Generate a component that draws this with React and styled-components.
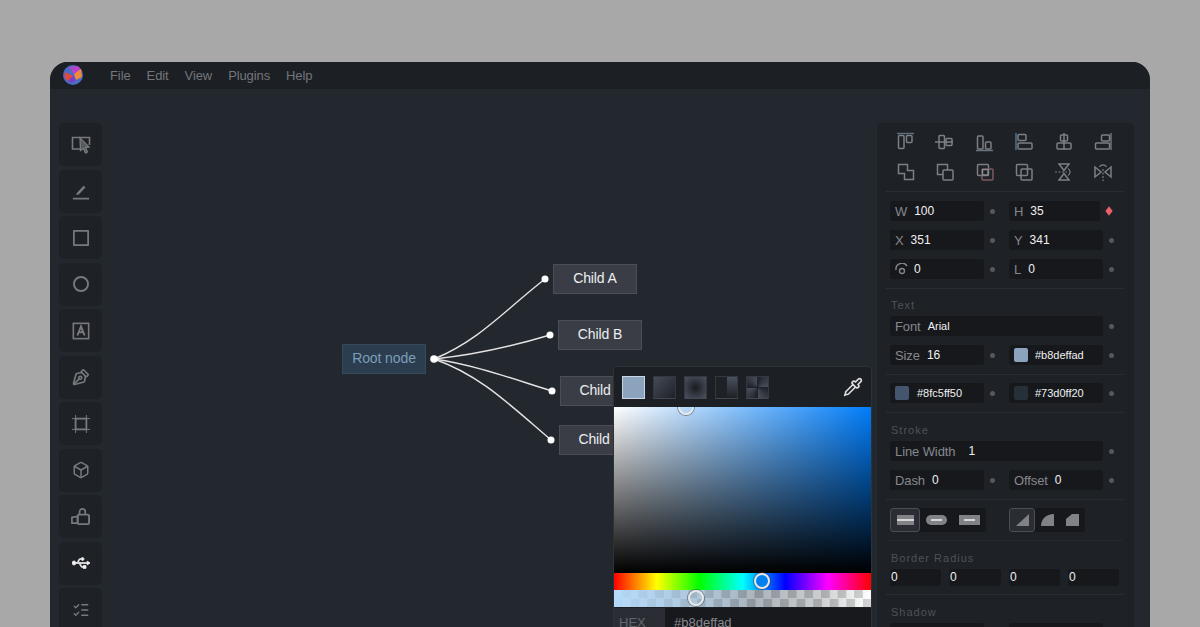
import React from "react";
import styled, { createGlobalStyle } from "styled-components";
import { Box, ListChecks, PenTool, Pipette } from "lucide-react";
import { FaUsb } from "react-icons/fa";

const GlobalStyle = createGlobalStyle`
  html, body {
    margin: 0;
    height: 627px;
    overflow: hidden;
    background: #a8a8a8;
    font-family: "Liberation Sans", Arial, sans-serif;
  }
`;

const Page = styled.div`
  height: 627px;
  padding: 62px 50px 0;
  box-sizing: border-box;
  overflow: hidden;
`;

const Window = styled.div`
  height: 640px;
  display: flex;
  flex-direction: column;
  background: #23272e;
  border-radius: 18px 18px 0 0;
  overflow: hidden;
`;

const MenuBar = styled.div`
  height: 27px;
  flex: none;
  box-sizing: border-box;
  display: flex;
  align-items: center;
  background: #1c1f23;
  padding: 0 0 1px 13px;
`;

const Logo = styled.svg`
  width: 20px;
  height: 20px;
  margin-right: 27px;
`;

const MenuItem = styled.span`
  font-size: 13px;
  letter-spacing: -0.1px;
  color: #73767b;
  margin-right: 16px;
`;

const Main = styled.div`
  flex: 1;
  display: flex;
  padding: 34px 16px 0 9px;
  min-height: 0;
`;

const Toolbar = styled.div`
  width: 43px;
  flex: none;
  display: flex;
  flex-direction: column;
  gap: 3.5px;
`;

const ToolButton = styled.div`
  width: 43px;
  height: 43px;
  flex: none;
  display: flex;
  align-items: center;
  justify-content: center;
  background: #1e2126;
  border-radius: 5px;
  color: ${(p) => (p.$active ? "#f2f2f2" : "#77797d")};
`;

const Canvas = styled.div`
  flex: 1;
  position: relative;
`;

const Wires = styled.svg`
  position: absolute;
  left: 0;
  top: 0;
  width: 775px;
  height: 500px;
`;

const Node = styled.div`
  position: absolute;
  left: ${(p) => p.$x}px;
  top: ${(p) => p.$y}px;
  width: 84px;
  height: 30px;
  box-sizing: border-box;
  padding-bottom: 2px;
  display: flex;
  align-items: center;
  justify-content: center;
  font-size: 14px;
  letter-spacing: -0.1px;
  background: ${(p) => (p.$root ? "#2b3d4e" : "#3a3d45")};
  border: 1px solid ${(p) => (p.$root ? "#344a5d" : "#4b4e55")};
  color: ${(p) => (p.$root ? "#7c9db8" : "#eceef0")};
`;

const Picker = styled.div`
  position: absolute;
  left: 511px;
  top: 243px;
  width: 259px;
  height: 270px;
  box-sizing: border-box;
  background: #1c1f24;
  border: 1px solid #2d3138;
  border-bottom: none;
  border-radius: 4px 4px 0 0;
`;

const SwatchRow = styled.div`
  height: 40px;
  display: flex;
  align-items: center;
  gap: 8px;
  padding: 0 8px;
`;

const FillSwatch = styled.div`
  width: 23px;
  height: 23px;
  box-sizing: border-box;
  background: ${(p) => p.$fill};
  border: 1px solid ${(p) => (p.$active ? "#c8d6e4" : "#33373e")};
  border-bottom-color: ${(p) => (p.$active ? "#c8d6e4" : "#43474f")};
`;

const DropperSlot = styled.div`
  margin-left: auto;
  display: flex;
  color: #dcdcdc;
`;

const Saturation = styled.div`
  position: relative;
  height: 166px;
  overflow: hidden;
  background: linear-gradient(to top, #000, transparent),
    linear-gradient(to right, #fff, #007dfa);
`;

const Slider = styled.div`
  position: relative;
  height: 17px;
  background: ${(p) => p.$bg};
  background-size: ${(p) => p.$size || "auto"};
`;

const Thumb = styled.div`
  position: absolute;
  left: ${(p) => p.$x}px;
  top: ${(p) => p.$y}px;
  width: 16px;
  height: 16px;
  box-sizing: border-box;
  border-radius: 50%;
  background: ${(p) => p.$fill};
  border: 2px solid #e6e7e8;
  box-shadow: 0 0 0 1px rgba(60, 66, 74, 0.55);
  transform: translate(-50%, -50%);
`;

const HexRow = styled.div`
  display: flex;
  height: 30px;
  margin-top: 1px;
  background: #17191d;
  font-size: 13px;
`;

const HexLabel = styled.div`
  width: 51px;
  padding: 7px 0 0 5px;
  box-sizing: border-box;
  background: #2a2e34;
  color: #62666c;
`;

const HexValue = styled.div`
  padding: 7px 0 0 9px;
  color: #85888d;
`;

const Panel = styled.div`
  width: 257px;
  flex: none;
  box-sizing: border-box;
  padding: 0 11px 0 9px;
  background: #1e2126;
  border-radius: 5px;
`;

const Section = styled.div`
  padding: ${(p) => p.$top}px 0 ${(p) => p.$bottom}px 4px;
  border-bottom: 1px solid ${(p) => (p.$faint ? "#25282e" : "#2a2d33")};
`;

const IconGrid = styled.div`
  display: grid;
  grid-template-columns: repeat(6, 39.5px);
  grid-auto-rows: 20px;
  row-gap: 10px;
  margin-left: -4px;
  color: #7c7f84;
`;

const IconCell = styled.div`
  display: flex;
  align-items: center;
  justify-content: center;
`;

const GroupTitle = styled.div`
  height: 14px;
  line-height: 14px;
  margin-bottom: 4px;
  padding-left: 1px;
  font-size: 11px;
  letter-spacing: 1px;
  color: #4e5258;
`;

const Rows = styled.div`
  display: flex;
  flex-direction: column;
  gap: 9px;
`;

const Row = styled.div`
  display: flex;
  align-items: center;
  height: 20px;
`;

const Field = styled.div`
  width: ${(p) => p.$w}px;
  height: 20px;
  flex: none;
  display: flex;
  align-items: center;
  gap: ${(p) => p.$gap || 7}px;
  box-sizing: border-box;
  padding-left: 5px;
  background: #16181c;
  border-radius: 3px;
`;

const FieldLabel = styled.span`
  font-size: 13px;
  letter-spacing: -0.1px;
  color: #85888d;
`;

const FieldValue = styled.span`
  font-size: ${(p) => (p.$small ? 11 : 12)}px;
  color: #f0f0f0;
`;

const ColorChip = styled.span`
  width: 14px;
  height: 14px;
  border-radius: 2px;
  background: ${(p) => p.$color};
`;

const Dot = styled.span`
  width: 5px;
  height: 5px;
  flex: none;
  margin: 0 14px 0 6px;
  border-radius: 50%;
  background: #55585d;
`;

const Diamond = styled.span`
  width: 6px;
  height: 6px;
  margin-left: 6px;
  background: #ea5f68;
  transform: rotate(45deg) skew(8deg, 8deg);
`;

const ToggleRow = styled.div`
  display: flex;
  gap: 23px;
`;

const ToggleGroup = styled.div`
  display: flex;
  height: 24px;
  background: #16181c;
  border-radius: 3px;
`;

const Toggle = styled.div`
  width: ${(p) => p.$w}px;
  display: flex;
  align-items: center;
  justify-content: center;
  box-sizing: border-box;
  border-radius: 3px;
  background: ${(p) => (p.$active ? "#2a2d33" : "transparent")};
  border: 1px solid ${(p) => (p.$active ? "#4a4d53" : "transparent")};
`;

const RadiusRow = styled.div`
  display: grid;
  grid-template-columns: 51px 52px 51px 51px;
  column-gap: 8px;
`;

const RadiusInput = styled.div`
  height: 17px;
  line-height: 17px;
  font-size: 12px;
  padding-left: 1px;
  color: #f0f0f0;
  background: #16181c;
  border-radius: 3px;
`;

const Line = (props) => <path fill="none" stroke="currentColor" strokeWidth="1.5" {...props} />;
const Frame = ({ x, y, w, h, c }) => (
  <rect x={x} y={y} width={w} height={h} rx="1" fill="none" stroke={c || "currentColor"} strokeWidth="1.5" />
);

const panelIcons = [
  <>
    <Line d="M1 1.5H18" stroke="#5d6d7c" />
    <Frame x={2.5} y={3.5} w={5.5} h={13} />
    <Frame x={10.5} y={3.5} w={5.5} h={7} />
  </>,
  <>
    <Line d="M0 10H18" />
    <Frame x={4} y={3.5} w={5.5} h={13} />
    <Frame x={11} y={6.5} w={6} h={7} />
  </>,
  <>
    <Line d="M1 18.5H18" stroke="#6d7480" />
    <Frame x={2.5} y={4} w={5.5} h={13} />
    <Frame x={10.5} y={10} w={5.5} h={7} />
  </>,
  <>
    <Line d="M2 1V18" stroke="#51738f" />
    <Frame x={4} y={2.5} w={8} h={6} />
    <Frame x={4} y={11} w={14} h={6} />
  </>,
  <>
    <Line d="M10 1V18" />
    <Frame x={6.5} y={3} w={7} h={6} />
    <Frame x={3} y={11} w={14} h={6} />
  </>,
  <>
    <Line d="M18 1V18" stroke="#6d7480" />
    <Frame x={8.5} y={3} w={8} h={6} />
    <Frame x={2.5} y={11} w={14} h={6} />
  </>,
  <Line d="M2.5 2.5H11.5V8.5H17.5V17.5H8.5V11.5H2.5Z" />,
  <>
    <Line d="M8 12.5H2.5V2.5H12.5V8" />
    <Frame x={8} y={8} w={10} h={10} />
  </>,
  <>
    <Frame x={2.5} y={2.5} w={11} h={11} />
    <Frame x={7} y={7} w={11} h={11} c="#7a5a60" />
    <rect x="7.6" y="7.6" width="5.4" height="5.4" fill="none" stroke="#8b8e93" strokeWidth="1.2" />
  </>,
  <>
    <Frame x={2.5} y={2.5} w={11} h={11} />
    <Frame x={7} y={7} w={11} h={11} />
  </>,
  <>
    <Line d="M5 2H15L10 8.5Z" />
    <Line d="M5 18H15L10 11.5Z" />
    <Line d="M1 10H13" strokeDasharray="2 1.5" strokeWidth="1.2" />
    <Line d="M14 6.5A4 4 0 0 1 14 13.5" strokeWidth="1.2" />
  </>,
  <>
    <Line d="M2 5V15L8 10Z" />
    <Line d="M18 5V15L12 10Z" />
    <Line d="M10 7V19" strokeDasharray="2 1.5" strokeWidth="1.2" />
    <Line d="M6.5 5A4 4 0 0 1 13.5 5" strokeWidth="1.2" />
  </>,
];

const Glyph = ({ size = 20, children }) => (
  <svg width={size} height={size} viewBox="0 0 20 20">
    {children}
  </svg>
);

const toolIcons = [
  <Glyph size={20}>
    <path d="M11 14H1.5V2.5H18.5V10" fill="none" stroke="currentColor" strokeWidth="1.6" />
    <path d="M9 3L18 12L14.5 12.5L16.5 17L14.5 18L12.5 13.5L9.5 15.5Z" fill="#55585c" stroke="currentColor" strokeWidth="1.3" />
  </Glyph>,
  <Glyph size={18}>
    <path d="M6 12L13 4.5L14.5 6L7.5 13.5L5 14Z" fill="currentColor" stroke="currentColor" strokeWidth="0.8" />
    <Line d="M1 18.5H19" strokeWidth="1.8" />
  </Glyph>,
  <Glyph size={16}>
    <rect x="1" y="1" width="18" height="18" rx="1" fill="none" stroke="currentColor" strokeWidth="2.4" />
  </Glyph>,
  <Glyph size={16}>
    <circle cx="10" cy="10" r="8.8" fill="none" stroke="currentColor" strokeWidth="2.4" />
  </Glyph>,
  <svg width="18" height="18" viewBox="0 0 20 20">
    <rect x="1.5" y="1.5" width="17" height="17" fill="none" stroke="currentColor" strokeWidth="1.8" />
    <path d="M6 15L10 5L14 15M7.5 11.5H12.5" fill="none" stroke="currentColor" strokeWidth="2.2" />
  </svg>,
  <PenTool size={18} strokeWidth={2.2} style={{ transform: "rotate(-90deg)" }} />,
  <Glyph size={18}>
    <rect x="4" y="4" width="12" height="12" fill="none" stroke="currentColor" strokeWidth="2" />
    <Line d="M0 4H20M0 16H20M4 0V20M16 0V20" strokeWidth="1.1" />
  </Glyph>,
  <Box size={18} strokeWidth={2} />,
  <Glyph size={19}>
    <rect x="7" y="8" width="12" height="10" rx="1.5" fill="none" stroke="currentColor" strokeWidth="2" />
    <path d="M9 8V5A3 3 0 0 1 15 5V8" fill="none" stroke="currentColor" strokeWidth="1.8" />
    <path d="M1 11L7 10V17H1Z" fill="none" stroke="currentColor" strokeWidth="1.8" />
  </Glyph>,
  <FaUsb size={18} stroke="currentColor" strokeWidth={24} />,
  <ListChecks size={18} strokeWidth={1.8} />,
];

const capIcons = [
  <svg width="17" height="10" viewBox="0 0 17 10">
    <rect width="17" height="10" fill="#808285" />
    <rect y="4" width="17" height="2" fill="#d6d6d6" />
  </svg>,
  <svg width="21" height="10" viewBox="0 0 21 10">
    <rect width="21" height="10" rx="5" fill="#808285" />
    <rect x="5" y="4" width="11" height="2" fill="#d6d6d6" />
  </svg>,
  <svg width="21" height="10" viewBox="0 0 21 10">
    <rect width="21" height="10" fill="#808285" />
    <rect x="5" y="4" width="11" height="2" fill="#d6d6d6" />
  </svg>,
];

const cornerIcons = [
  <svg width="13" height="12" viewBox="0 0 13 12">
    <path d="M0 12L13 0V12Z" fill="#808285" />
  </svg>,
  <svg width="13" height="12" viewBox="0 0 13 12">
    <path d="M0 12C0 5 5 0 13 0V12Z" fill="#808285" />
  </svg>,
  <svg width="13" height="12" viewBox="0 0 13 12">
    <path d="M0 5L6 0H13V12H0Z" fill="#808285" />
  </svg>,
];

const fills = [
  { fill: "#8ba3bd", active: true },
  { fill: "linear-gradient(135deg, #454b59, #1e2126)" },
  { fill: "radial-gradient(circle, #1a1c20, #4c5261)" },
  { fill: "linear-gradient(to bottom, #4a505e, #1e2126) right / 50% 100% no-repeat, #1e2126" },
  { fill: "conic-gradient(from 90deg, #1e2126, #4a505e 25%, #1e2126 25%, #4a505e 50%, #1e2126 50%, #4a505e 75%, #1e2126 75%, #4a505e)" },
];

const wires = [
  "M434 359C480 340 505 310 545 279",
  "M434 359C475 355 510 347 550 335",
  "M434 359C475 365 510 378 552 391",
  "M434 359C480 375 510 405 551 440",
];

const wireEnds = [
  [545, 279],
  [550, 335],
  [552, 391],
  [551, 440],
];

const checker =
  "linear-gradient(to right, rgba(184,222,255,.92), rgba(184,222,255,0) 55%), repeating-conic-gradient(rgba(0,0,0,.17) 0 25%, transparent 0 50%), linear-gradient(to right, #a9bdcf, #abb5bd 55%, #cbcdce 80%, #fff)";

const App = () => {
  return (
    <Page>
      <GlobalStyle />
      <Window>
        <MenuBar>
          <Logo viewBox="0 0 20 20">
            <circle cx="10" cy="10" r="10" fill="#4a6cc4" />
            <path d="M6 2L15 1L19 6L11 9Z" fill="#b544c8" />
            <path d="M11 9L18 4L19 12L13 15Z" fill="#f08a3c" />
            <path d="M2 7L10 11L5 16L2 13Z" fill="#e8453c" />
            <path d="M10 11L13 15L8 18L5 16Z" fill="#7a3fc0" />
          </Logo>
          {["File", "Edit", "View", "Plugins", "Help"].map((m) => (
            <MenuItem key={m}>{m}</MenuItem>
          ))}
        </MenuBar>
        <Main>
          <Toolbar>
            {toolIcons.map((icon, i) => (
              <ToolButton key={i} $active={i === 9}>
                {icon}
              </ToolButton>
            ))}
          </Toolbar>
          <Canvas>
            <Wires viewBox="102 123 775 500">
              {wires.map((d) => (
                <path key={d} d={d} fill="none" stroke="#e4e4e4" strokeWidth="1.4" />
              ))}
              <circle cx="434" cy="359" r="3.8" fill="#fff" />
              {wireEnds.map(([cx, cy]) => (
                <circle key={cy} cx={cx} cy={cy} r="3.5" fill="#fff" />
              ))}
            </Wires>
            <Node $root $x={240} $y={221}>Root node</Node>
            <Node $x={451} $y={141}>Child A</Node>
            <Node $x={456} $y={197}>Child B</Node>
            <Node $x={458} $y={253}>Child C</Node>
            <Node $x={457} $y={302}>Child D</Node>
            <Picker>
              <SwatchRow>
                {fills.map((f, i) => (
                  <FillSwatch key={i} $fill={f.fill} $active={f.active} />
                ))}
                <DropperSlot>
                  <Pipette size={20} />
                </DropperSlot>
              </SwatchRow>
              <Saturation>
                <Thumb $x={72} $y={0} $fill="transparent" />
              </Saturation>
              <Slider $bg="linear-gradient(to right, #f00, #ff0, #0f0, #0ff, #00f, #f0f, #f00)">
                <Thumb $x={148} $y={8} $fill="#0080f0" />
              </Slider>
              <Slider $bg={checker} $size="100% 100%, 16.6px 17px, 100% 100%">
                <Thumb $x={82} $y={8} $fill="transparent" />
              </Slider>
              <HexRow>
                <HexLabel>HEX</HexLabel>
                <HexValue>#b8deffad</HexValue>
              </HexRow>
            </Picker>
          </Canvas>
          <Panel>
            <Section $top={9} $bottom={9}>
              <IconGrid>
                {panelIcons.map((icon, i) => (
                  <IconCell key={i}>
                    <Glyph>{icon}</Glyph>
                  </IconCell>
                ))}
              </IconGrid>
            </Section>
            <Section $top={9} $bottom={9}>
              <Rows>
                <Row>
                  <Field $w={94}><FieldLabel>W</FieldLabel><FieldValue>100</FieldValue></Field>
                  <Dot />
                  <Field $w={91}><FieldLabel>H</FieldLabel><FieldValue>35</FieldValue></Field>
                  <Diamond />
                </Row>
                <Row>
                  <Field $w={94}><FieldLabel>X</FieldLabel><FieldValue>351</FieldValue></Field>
                  <Dot />
                  <Field $w={94}><FieldLabel>Y</FieldLabel><FieldValue>341</FieldValue></Field>
                  <Dot />
                </Row>
                <Row>
                  <Field $w={94} $gap={6}>
                    <svg width="13" height="12" viewBox="0 0 13 12">
                      <path d="M1 7A6 6 0 0 1 12 3" fill="none" stroke="#85888d" strokeWidth="1.4" />
                      <circle cx="7" cy="8" r="2.5" fill="none" stroke="#85888d" strokeWidth="1.3" />
                    </svg>
                    <FieldValue>0</FieldValue>
                  </Field>
                  <Dot />
                  <Field $w={94}><FieldLabel>L</FieldLabel><FieldValue>0</FieldValue></Field>
                  <Dot />
                </Row>
              </Rows>
            </Section>
            <Section $top={9} $bottom={9}>
              <GroupTitle>Text</GroupTitle>
              <Rows>
                <Row>
                  <Field $w={213}><FieldLabel>Font</FieldLabel><FieldValue $small>Arial</FieldValue></Field>
                  <Dot />
                </Row>
                <Row>
                  <Field $w={94}><FieldLabel>Size</FieldLabel><FieldValue>16</FieldValue></Field>
                  <Dot />
                  <Field $w={94}><ColorChip $color="#8ba3bd" /><FieldValue $small>#b8deffad</FieldValue></Field>
                  <Dot />
                </Row>
              </Rows>
            </Section>
            <Section $top={8} $bottom={9}>
              <Row>
                <Field $w={94} $gap={8}><ColorChip $color="#44566d" /><FieldValue $small>#8fc5ff50</FieldValue></Field>
                <Dot />
                <Field $w={94}><ColorChip $color="#253039" /><FieldValue $small>#73d0ff20</FieldValue></Field>
                <Dot />
              </Row>
            </Section>
            <Section $top={10} $bottom={9}>
              <GroupTitle>Stroke</GroupTitle>
              <Rows>
                <Row>
                  <Field $w={213} $gap={13}><FieldLabel>Line Width</FieldLabel><FieldValue>1</FieldValue></Field>
                  <Dot />
                </Row>
                <Row>
                  <Field $w={94}><FieldLabel>Dash</FieldLabel><FieldValue>0</FieldValue></Field>
                  <Dot />
                  <Field $w={94}><FieldLabel>Offset</FieldLabel><FieldValue>0</FieldValue></Field>
                  <Dot />
                </Row>
              </Rows>
            </Section>
            <Section $top={8} $bottom={8} $faint>
              <ToggleRow>
                <ToggleGroup>
                  {capIcons.map((icon, i) => (
                    <Toggle key={i} $w={i === 0 ? 30 : 33} $active={i === 0}>{icon}</Toggle>
                  ))}
                </ToggleGroup>
                <ToggleGroup>
                  {cornerIcons.map((icon, i) => (
                    <Toggle key={i} $w={i === 0 ? 26 : 25} $active={i === 0}>{icon}</Toggle>
                  ))}
                </ToggleGroup>
              </ToggleRow>
            </Section>
            <Section $top={10} $bottom={8}>
              <GroupTitle>Border Radius</GroupTitle>
              <RadiusRow>
                {[0, 1, 2, 3].map((i) => (
                  <RadiusInput key={i}>0</RadiusInput>
                ))}
              </RadiusRow>
            </Section>
            <Section $top={10} $bottom={8}>
              <GroupTitle>Shadow</GroupTitle>
              <Row>
                <Field $w={94} />
                <Dot />
                <Field $w={94} />
                <Dot />
              </Row>
            </Section>
          </Panel>
        </Main>
      </Window>
    </Page>
  );
};

export default App;
